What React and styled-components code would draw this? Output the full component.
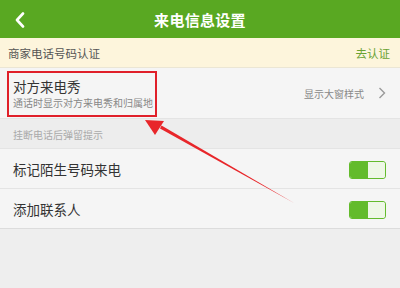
import styled, { createGlobalStyle } from 'styled-components';

const GlobalStyle = createGlobalStyle`
  html, body {
    margin: 0;
    padding: 0;
    background: #eeeeee;
    font-family: "Noto Sans CJK SC", "Noto Sans", sans-serif;
  }
`;

function Toggle() {
  return (
    <Switch>
      <SwitchFill />
      <SwitchKnob />
    </Switch>
  );
}

function App() {
  return (
    <Page>
      <GlobalStyle />
      <Header>
        <BackButton>
          <svg width="12" height="16" viewBox="0 0 12 16">
            <path d="M9 1.5 L3 8 L9 14.5" fill="none" stroke="#fff" strokeWidth="2.6" strokeLinecap="round" strokeLinejoin="round" />
          </svg>
        </BackButton>
        <Title>来电信息设置</Title>
      </Header>
      <Notice>
        <NoticeText>商家电话号码认证</NoticeText>
        <NoticeLink>去认证</NoticeLink>
      </Notice>
      <Row height={50}>
        <RowMain>
          <RowTitle>对方来电秀</RowTitle>
          <RowSub>通话时显示对方来电秀和归属地</RowSub>
        </RowMain>
        <RowValue>显示大窗样式</RowValue>
        <svg width="8" height="12" viewBox="0 0 8 12">
          <path d="M1.5 1 L6.5 6 L1.5 11" fill="none" stroke="#9a9a9a" strokeWidth="1.4" />
        </svg>
      </Row>
      <SectionLabel>挂断电话后弹留提示</SectionLabel>
      <Row height={39}>
        <RowMain>
          <RowTitle>标记陌生号码来电</RowTitle>
        </RowMain>
        <Toggle />
      </Row>
      <Row height={39} last>
        <RowMain>
          <RowTitle>添加联系人</RowTitle>
        </RowMain>
        <Toggle />
      </Row>
      <Highlight />
      <Arrow width="400" height="288" viewBox="0 0 400 288">
        <polygon points="294,203 160,128.5 161.5,125.5" fill="#e8262a" />
        <polygon points="145,120 164,121 155,135" fill="#e8262a" />
      </Arrow>
    </Page>
  );
}

const Page = styled.div`
  position: relative;
  width: 400px;
  height: 288px;
  overflow: hidden;
  background: #eeeeee;
  display: flex;
  flex-direction: column;
`;

const Header = styled.header`
  height: 38px;
  background: #59a822;
  display: flex;
  align-items: center;
  justify-content: center;
  position: relative;
  flex-shrink: 0;
`;

const BackButton = styled.div`
  position: absolute;
  left: 14px;
  top: 12px;
  display: flex;
`;

const Title = styled.h1`
  margin: 0;
  font-size: 15px;
  font-weight: 700;
  color: #ffffff;
  letter-spacing: 0.3px;
`;

const Notice = styled.div`
  height: 29px;
  background: #fdf5dc;
  border-bottom: 1px solid #ebe6d4;
  display: flex;
  align-items: center;
  justify-content: space-between;
  padding: 0 10px 0 8px;
  flex-shrink: 0;
`;

const NoticeText = styled.span`
  font-size: 11.5px;
  color: #555555;
`;

const NoticeLink = styled.span`
  font-size: 11.5px;
  color: #6aa232;
`;

const Row = styled.div`
  height: ${(p) => p.height}px;
  background: #f5f5f5;
  border-bottom: 1px solid ${(p) => (p.last ? '#dcdcdc' : '#e4e4e4')};
  display: flex;
  align-items: center;
  padding: 0 14px 0 13px;
  gap: 14px;
  flex-shrink: 0;
`;

const RowMain = styled.div`
  flex: 1;
  display: flex;
  flex-direction: column;
  gap: 1px;
`;

const RowTitle = styled.span`
  font-size: 13.5px;
  line-height: 18px;
  color: #333333;
`;

const RowSub = styled.span`
  font-size: 10px;
  line-height: 14px;
  color: #888888;
`;

const RowValue = styled.span`
  font-size: 10px;
  color: #888888;
`;

const SectionLabel = styled.div`
  height: 30px;
  background: #ededed;
  border-bottom: 1px solid #e4e4e4;
  display: flex;
  align-items: center;
  padding: 2px 13px 0;
  box-sizing: border-box;
  font-size: 10px;
  color: #aaaaaa;
  flex-shrink: 0;
`;

const Switch = styled.div`
  width: 37px;
  height: 18px;
  box-sizing: border-box;
  border: 1.5px solid #63bb2c;
  border-radius: 3px;
  display: flex;
  overflow: hidden;
  margin-top: 2px;
`;

const SwitchFill = styled.div`
  flex: 1;
  background: #63bb2c;
`;

const SwitchKnob = styled.div`
  flex: 1;
  background: #eef7e6;
  border-radius: 2px;
`;

const Highlight = styled.div`
  position: absolute;
  left: 7px;
  top: 71px;
  width: 150px;
  height: 46px;
  box-sizing: border-box;
  border: 2px solid #e0202a;
`;

const Arrow = styled.svg`
  position: absolute;
  left: 0;
  top: 0;
  pointer-events: none;
`;

export default App;
